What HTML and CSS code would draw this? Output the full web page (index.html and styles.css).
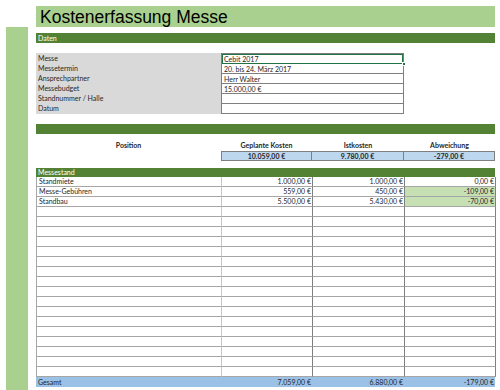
FILE: index.html
```html
<!DOCTYPE html>
<html lang="de">
<head>
<meta charset="utf-8">
<title>Kostenerfassung Messe</title>
<link rel="stylesheet" href="styles.css">
</head>
<body>
<div class="page">
  <div class="sidebar"></div>
  <main class="main">
    <h1 class="title">Kostenerfassung Messe</h1>
    <div class="bar bar-daten">Daten</div>

    <div class="info">
      <div class="info-labels">
        <div class="lbl">Messe</div>
        <div class="lbl">Messetermin</div>
        <div class="lbl">Ansprechpartner</div>
        <div class="lbl">Messebudget</div>
        <div class="lbl">Standnummer / Halle</div>
        <div class="lbl">Datum</div>
      </div>
      <div class="info-values">
        <div class="val selected">Cebit 2017<span class="handle"></span></div>
        <div class="val">20. bis 24. März 2017</div>
        <div class="val">Herr Walter</div>
        <div class="val">15.000,00 €</div>
        <div class="val"></div>
        <div class="val"></div>
      </div>
    </div>

    <div class="bar bar-sep"></div>

    <div class="grid head">
      <div class="h">Position</div>
      <div class="h">Geplante Kosten</div>
      <div class="h">Istkosten</div>
      <div class="h">Abweichung</div>
    </div>
    <div class="grid totals">
      <div class="blank"></div>
      <div class="t">10.059,00 €</div>
      <div class="t">9.780,00 €</div>
      <div class="t">-279,00 €</div>
    </div>

    <div class="bar bar-section">Messestand</div>

    <div class="grid rows" id="rows">
      <div class="c pos">Standmiete</div><div class="c num">1.000,00 €</div><div class="c num">1.000,00 €</div><div class="c num">0,00 €</div>
      <div class="c pos">Messe-Gebühren</div><div class="c num">559,00 €</div><div class="c num">450,00 €</div><div class="c num neg">-109,00 €</div>
      <div class="c pos">Standbau</div><div class="c num">5.500,00 €</div><div class="c num">5.430,00 €</div><div class="c num neg">-70,00 €</div>
      <div class="c pos"></div><div class="c num"></div><div class="c num"></div><div class="c num"></div>
      <div class="c pos"></div><div class="c num"></div><div class="c num"></div><div class="c num"></div>
      <div class="c pos"></div><div class="c num"></div><div class="c num"></div><div class="c num"></div>
      <div class="c pos"></div><div class="c num"></div><div class="c num"></div><div class="c num"></div>
      <div class="c pos"></div><div class="c num"></div><div class="c num"></div><div class="c num"></div>
      <div class="c pos"></div><div class="c num"></div><div class="c num"></div><div class="c num"></div>
      <div class="c pos"></div><div class="c num"></div><div class="c num"></div><div class="c num"></div>
      <div class="c pos"></div><div class="c num"></div><div class="c num"></div><div class="c num"></div>
      <div class="c pos"></div><div class="c num"></div><div class="c num"></div><div class="c num"></div>
      <div class="c pos"></div><div class="c num"></div><div class="c num"></div><div class="c num"></div>
      <div class="c pos"></div><div class="c num"></div><div class="c num"></div><div class="c num"></div>
      <div class="c pos"></div><div class="c num"></div><div class="c num"></div><div class="c num"></div>
      <div class="c pos"></div><div class="c num"></div><div class="c num"></div><div class="c num"></div>
      <div class="c pos"></div><div class="c num"></div><div class="c num"></div><div class="c num"></div>
      <div class="c pos"></div><div class="c num"></div><div class="c num"></div><div class="c num"></div>
      <div class="c pos"></div><div class="c num"></div><div class="c num"></div><div class="c num"></div>
      <div class="c pos"></div><div class="c num"></div><div class="c num"></div><div class="c num"></div>
    </div>

    <div class="grid gesamt">
      <div class="g-label">Gesamt</div>
      <div class="g-num">7.059,00 €</div>
      <div class="g-num">6.880,00 €</div>
      <div class="g-num">-179,00 €</div>
    </div>
  </main>
</div>
</body>
</html>
```

FILE: styles.css
```css
* { box-sizing: border-box; }
html, body { margin: 0; padding: 0; background: #ffffff; }
body {
  font-family: "Lato", "Liberation Sans", sans-serif;
  font-size: 7px;
  color: #262626;
  width: 500px;
  height: 390px;
  overflow: hidden;
}
.page {
  display: flex;
  padding-left: 6px;
  height: 390px;
}
.sidebar {
  width: 22px;
  margin-top: 27px;
  background: #a9d08e;
}
.main {
  margin-left: 8px;
  width: 459px;
  padding-top: 6px;
  display: flex;
  flex-direction: column;
}
.title {
  margin: 0;
  height: 21px;
  background: #a9d08e;
  font-family: "Liberation Sans", Arial, sans-serif;
  font-weight: normal;
  font-size: 17.5px;
  line-height: 23px;
  color: #000;
  padding-left: 4px;
}
.bar {
  height: 10px;
  background: #548235;
  color: #fff;
  line-height: 10px;
  padding-left: 2px;
  font-size: 7px;
}
.bar-daten { margin-top: 6px; }
.info {
  margin-top: 10px;
  display: flex;
}
.info-labels {
  width: 185px;
  background: #d9d9d9;
}
.lbl, .val {
  height: 10px;
  line-height: 11px;
  padding-left: 2px;
  white-space: nowrap;
}
.info-values {
  width: 183px;
  border: 1px solid #7f7f7f;
  border-bottom-width: 0;
  margin-top: 0;
}
.val {
  border-bottom: 1px solid #7f7f7f;
  height: 10px;
  line-height: 10px;
  position: relative;
}
.val.selected {
  outline: 1px solid #217346;
  outline-offset: -1px;
}
.handle {
  position: absolute;
  right: -3px;
  bottom: -3px;
  width: 4px;
  height: 4px;
  background: #217346;
  border: 1px solid #fff;
}
.bar-sep { margin-top: 10px; }
.grid {
  display: grid;
  grid-template-columns: 185px 91px 92px 91px;
}
.head {
  height: 17px;
  align-items: end;
  padding-bottom: 1px;
}
.h {
  text-align: center;
  font-weight: bold;
  line-height: 9px;
}
.totals {
  height: 10px;
}
.t {
  background: #bdd7ee;
  border: 1px solid #7f7f7f;
  border-left-width: 0;
  text-align: center;
  font-weight: bold;
  line-height: 8px;
}
.totals .t:nth-child(2) { border-left-width: 1px; }
.bar-section { margin-top: 7px; height: 9px; line-height: 9px; }
.rows {
  border-left: 1px solid #a6a6a6;
}
.c {
  height: 10px;
  line-height: 9px;
  border-bottom: 1px solid #a6a6a6;
  border-right: 1px solid #7f7f7f;
  white-space: nowrap;
}
.pos { padding-left: 2px; border-right-color: #c8c8c8; }
.num { text-align: right; padding-right: 1px; }
.neg { background: #c6e0b4; }
.gesamt {
  height: 10px;
  background: #9bc2e6;
  line-height: 10px;
}
.g-label { padding-left: 2px; }
.g-num { text-align: right; padding-right: 1px; }
```
